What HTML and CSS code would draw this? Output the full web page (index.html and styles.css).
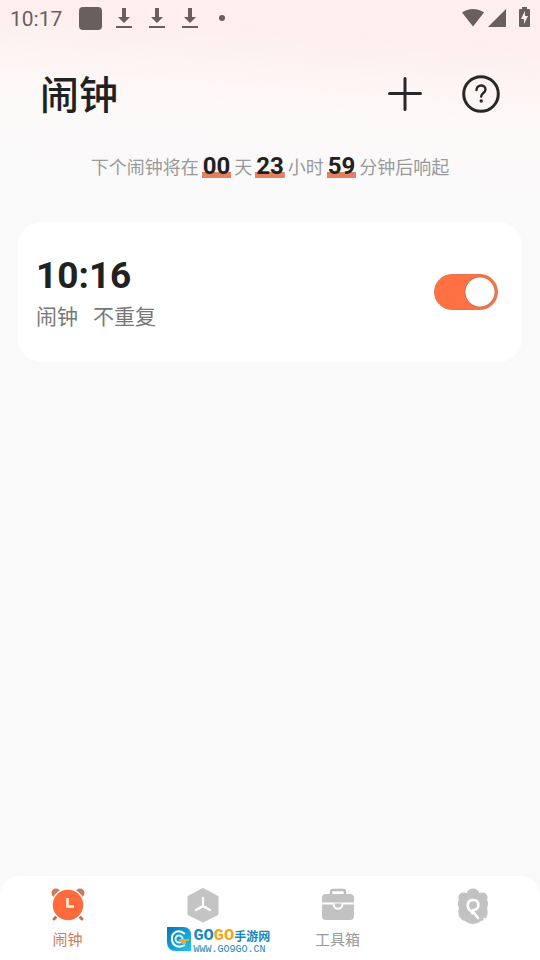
FILE: index.html
```html
<!DOCTYPE html>
<html lang="zh-CN">
<head>
<meta charset="utf-8">
<meta name="viewport" content="width=device-width, initial-scale=1">
<title>闹钟</title>
<link rel="stylesheet" href="styles.css">
</head>
<body>
<div class="app">
  <div class="status">
    <div class="status-left">
      <span class="clock">10:17</span>
      <span class="square"></span>
      <svg class="download" viewBox="0 0 16 22"><path d="M6 1h4v9h4l-6 6-6-6h4zM0 19h16v2H0z"/></svg>
      <svg class="download" viewBox="0 0 16 22"><path d="M6 1h4v9h4l-6 6-6-6h4zM0 19h16v2H0z"/></svg>
      <svg class="download" viewBox="0 0 16 22"><path d="M6 1h4v9h4l-6 6-6-6h4zM0 19h16v2H0z"/></svg>
      <span class="dot"></span>
    </div>
    <svg class="signals" viewBox="0 0 68 22"><path d="M0 5.500C6 .8 16 .8 22 5.500L11 19.500zM26 20L44 2v18z"/><path fill-rule="evenodd" d="M58 2h2V0h5v2h2q1 0 1 1v16q0 1-1 1h-9q-1 0-1-1V3q0-1 1-1zM63 4l-4 8h3v5l4-8h-3z"/></svg>
  </div>

  <header class="header">
    <h1>闹钟</h1>
    <div class="actions">
      <button type="button" aria-label="添加闹钟"><svg viewBox="0 0 38 38"><path d="M19 3.500v31M3.500 18.500h31"/></svg></button>
      <button type="button" aria-label="帮助"><svg viewBox="0 0 38 38"><circle cx="19" cy="19" r="17.300"/><path class="question" d="M14.500 15c0-6 9-6 9-.5 0 3.500-4.300 3.500-4.300 7"/><circle class="point" cx="19.200" cy="26" r="1.700"/></svg></button>
    </div>
  </header>

  <p class="countdown">下个闹钟将在<b>00</b>天<b>23</b>小时<b>59</b>分钟后响起</p>

  <main>
    <section class="card">
      <label for="alarm"><strong>10:16</strong><span class="detail"><span>闹钟</span><span>不重复</span></span></label>
      <input class="switch" id="alarm" type="checkbox" role="switch" checked>
    </section>
  </main>

  <nav class="tabs">
    <a class="active" href="#alarm">
      <svg viewBox="0 0 36 36"><g fill="#cd7a5b"><circle cx="6" cy="6" r="4.500"/><circle cx="30" cy="6" r="4.500"/></g><path d="M7 29l-3 3M29 29l3 3" stroke="#b97358" stroke-width="3" stroke-linecap="round"/><circle cx="18" cy="18" r="16" fill="#ff6b3d" stroke="#fff" stroke-width="1.500"/><path d="M17.500 11v8.500H24" fill="none" stroke="#fff0d8" stroke-width="2.600"/></svg>
      <span>闹钟</span>
    </a>
    <a href="#timer" aria-label="计时">
      <svg viewBox="0 0 36 36"><path d="M18 2.500L32 10v17L18 34 4 27V10z" fill="#c4c4c4" stroke="#c4c4c4" stroke-width="3" stroke-linejoin="round"/><path d="M18 11v8l-7 4M18 19l7 4" fill="none" stroke="#fff" stroke-width="2.200" stroke-linecap="round"/></svg>
    </a>
    <a href="#tools">
      <svg viewBox="0 0 36 36"><path d="M11 8V5q0-2 2-2h10q2 0 2 2v3" fill="none" stroke="#bdbdbd" stroke-width="2.500"/><rect x="2" y="7" width="32" height="26" rx="4" fill="#c2c2c2"/><path d="M1 16.500h34" stroke="#fff" stroke-width="2"/><path d="M13.500 16.500c0 7 9 7 9 0" fill="#c2c2c2" stroke="#fff" stroke-width="2"/></svg>
      <span>工具箱</span>
    </a>
    <a href="#profile" aria-label="我的">
      <svg viewBox="0 0 36 40"><path d="M12 6c1-6 11-6 12 0 6-2 10 2 8 7 2 3 1 6 0 8 2 8-1 12-6 13-5 4-11 4-16 0-5-1-8-7-6-13-1-2-2-5 0-8-2-5 2-9 8-7z" fill="#c2c2c2"/><path d="M16 24c-5-3-4-11 2-11 7 0 7 9 1 10-3 1-3 4 0 3l4 5" fill="none" stroke="#fff" stroke-width="2.600" stroke-linecap="round"/><path d="M29 31l2 5" stroke="#fff" stroke-width="2"/></svg>
    </a>
    <div class="watermark">
      <svg viewBox="0 0 24 24"><defs><linearGradient id="blue" y2="1"><stop stop-color="#0874ba"/><stop offset="1" stop-color="#20c7e8"/></linearGradient></defs><path d="M0 0h16q8 0 8 8v16H9q-9 0-9-9z" fill="url(#blue)"/><path d="M18 7C11 1 4 6 5 13c1 7 8 8 13 5" fill="none" stroke="#fff" stroke-width="2"/><circle cx="12" cy="12" r="3.500" fill="none" stroke="#d7f5fb" stroke-width="2"/><path d="M12 12h10v2h-3v3h-4l-1-2h-2z" fill="#e9aa3c"/></svg>
      <div class="wordmark"><div><b>GO</b><b class="gold">GO</b><b class="chinese">手游网</b></div><small>WWW.GO9GO.CN</small></div>
    </div>
  </nav>
</div>
</body>
</html>
```

FILE: styles.css
```css
* { box-sizing: border-box; }

body {
  margin: 0;
  background: #f9f9f9;
  color: #212121;
  font-family: Roboto, "Noto Sans CJK SC", sans-serif;
}

.app {
  display: flex;
  flex-direction: column;
  min-height: 100vh;
  background: linear-gradient(184deg, #ffeeed 0, #feefee 50px, #fdf9f9 125px, #f9f9f9 240px);
}

.status {
  display: flex;
  align-items: center;
  justify-content: space-between;
  height: 36px;
  padding: 0 10px;
  color: #685f5f;
}

.status-left { display: flex; align-items: center; }
.clock { width: 69px; padding-top: 2px; font-size: 21px; }
.square { width: 23px; height: 23px; margin-right: 14px; border-radius: 4px; background: currentColor; }
.download { width: 16px; height: 22px; margin-right: 17px; fill: currentColor; }
.dot { width: 6px; height: 6px; margin-left: 4px; border-radius: 50%; background: currentColor; }
.signals { width: 68px; height: 22px; fill: currentColor; }

.header {
  display: flex;
  align-items: center;
  justify-content: space-between;
  height: 116px;
  padding: 0 40px;
}

h1 { margin: 0; padding-top: 4px; font-size: 39px; font-weight: 500; line-height: 56px; }
.actions { display: flex; gap: 38px; }

button {
  width: 38px;
  height: 38px;
  padding: 0;
  border: 0;
  background: none;
}

button svg { display: block; width: 38px; fill: none; stroke: #292727; stroke-width: 3; stroke-linecap: round; }
button .question { stroke-width: 2.4; }
button .point { fill: #292727; stroke: none; }

.countdown {
  display: flex;
  align-items: center;
  justify-content: center;
  height: 28px;
  margin: 0 0 2px;
  color: #999;
  font-size: 18px;
}

.countdown b {
  margin: 0 3px;
  padding: 0 1px;
  background: linear-gradient(#e28060, #e28060) bottom / 100% 6px no-repeat;
  color: #212121;
  font-size: 24px;
  font-weight: 700;
  line-height: 24px;
}

main { flex: 1; padding: 40px 18px; }

.card {
  display: flex;
  align-items: center;
  justify-content: space-between;
  height: 140px;
  padding: 0 24px 0 18px;
  border-radius: 24px;
  background: #fff;
}

label { display: flex; flex-direction: column; padding-top: 6px; }
strong { font-size: 37px; line-height: 44px; }
.detail { display: flex; gap: 15px; color: #777; font-size: 21px; line-height: 38px; }

.switch {
  width: 64px;
  height: 36px;
  margin: 0;
  border: 1px solid #e77450;
  border-radius: 18px;
  appearance: none;
  background: radial-gradient(circle at 45px 17px, #fff 14px, #c87557 15px, #ff7043 16px);
}

.tabs {
  position: relative;
  display: grid;
  grid-template-columns: repeat(4, 1fr);
  height: 84px;
  border-radius: 20px 20px 0 0;
  background: #fff;
}

.tabs a {
  display: flex;
  flex-direction: column;
  align-items: center;
  padding-top: 11px;
  color: #999;
  font-size: 15px;
  line-height: 22px;
  text-decoration: none;
}

.tabs a svg { width: 36px; height: 36px; margin-bottom: 6px; }
.tabs a:nth-child(4) svg { height: 40px; }
.tabs .active { color: #d17a5c; }

.watermark {
  position: absolute;
  bottom: 5px;
  left: 31%;
  display: flex;
  gap: 2px;
}

.watermark svg { width: 24px; height: 24px; }
.wordmark { color: #1689bd; white-space: nowrap; }
.wordmark div { display: flex; align-items: center; height: 18px; line-height: 18px; }
.wordmark b { font-family: "Liberation Mono", monospace; font-size: 17px; }
.wordmark .gold { color: #f7a31b; }
.wordmark .chinese { font-family: "Noto Sans CJK SC", sans-serif; font-size: 12px; }
.wordmark small { display: block; font-family: "Liberation Mono", monospace; font-size: 10px; line-height: 10px; }
```
